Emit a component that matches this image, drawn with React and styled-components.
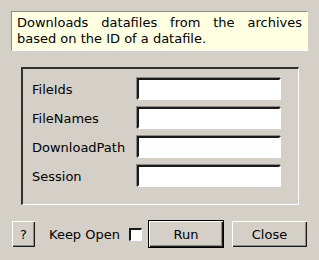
import styled, { createGlobalStyle } from "styled-components";

const GlobalStyle = createGlobalStyle`
    html, body {
        margin: 0;
        padding: 0;
        background: #d4d0c8;
    }
    * {
        box-sizing: border-box;
    }
`;

const fields = ["FileIds", "FileNames", "DownloadPath", "Session"];

export default function App() {
    return (
        <>
            <GlobalStyle />
            <Dialog>
                <Description>
                    Downloads datafiles from the archives based on the ID of a datafile.
                </Description>
                <Frame>
                    <Form>
                        {fields.map((name) => (
                            <Row key={name}>
                                <Label>{name}</Label>
                                <Entry type="text" />
                            </Row>
                        ))}
                    </Form>
                </Frame>
                <Footer>
                    <Button $width={23}>?</Button>
                    <KeepOpen>
                        Keep Open
                        <Check />
                    </KeepOpen>
                    <Button $width={76} $default>
                        Run
                    </Button>
                    <Button $width={75}>Close</Button>
                </Footer>
            </Dialog>
        </>
    );
}

const Dialog = styled.div`
    width: 319px;
    height: 260px;
    padding-top: 11px;
    display: flex;
    flex-direction: column;
    align-items: flex-start;
    font-family: "DejaVu Sans", "Liberation Sans", sans-serif;
    font-size: 13px;
    color: #000;
    background: #d4d0c8;
`;

const Description = styled.div`
    margin-left: 11px;
    width: 297px;
    height: 40px;
    padding: 3px 5px 0 5px;
    background: #ffffe1;
    border-top: 1px solid #8a8a8a;
    border-left: 1px solid #8a8a8a;
    border-right: 1px solid #ffffff;
    border-bottom: 1px solid #ffffff;
    line-height: 16px;
    text-align: justify;
`;

const Frame = styled.div`
    margin: 16px 0 0 21px;
    width: 278px;
    height: 138px;
    border-top: 2px solid #303030;
    border-left: 2px solid #303030;
    border-right: 1px solid #ffffff;
    border-bottom: 1px solid #ffffff;
    padding: 9px 0 0 9px;
`;

const Form = styled.div`
    display: flex;
    flex-direction: column;
    gap: 7px;
`;

const Row = styled.div`
    display: flex;
    align-items: center;
    height: 22px;
`;

const Label = styled.span`
    width: 105px;
    padding-top: 1px;
`;

const Entry = styled.input`
    width: 144px;
    height: 22px;
    margin: 0;
    padding: 0 3px;
    background: #ffffff;
    border-top: 2px solid #1a1a1a;
    border-left: 2px solid #1a1a1a;
    border-right: 2px solid #ffffff;
    border-bottom: 2px solid #ffffff;
    box-shadow: -1px -1px 0 0 #8a8a8a;
    outline: none;
    font: inherit;
`;

const Footer = styled.div`
    margin: 15px 0 0 12px;
    display: flex;
    align-items: center;
    height: 28px;
`;

const Button = styled.button`
    width: ${(p) => p.$width}px;
    height: ${(p) => (p.$default ? 28 : 26)}px;
    margin: 0 ${(p) => (p.$default ? 8 : 0)}px 0 0;
    padding: 0;
    background: #d4d0c8;
    border: ${(p) => (p.$default ? "1px solid #000" : "none")};
    box-shadow: inset 1px 1px 0 #ffffff, inset -1px -1px 0 #1a1a1a,
        inset -2px -2px 0 #8a8a8a;
    font: inherit;
    color: #000;
`;

const KeepOpen = styled.label`
    display: flex;
    align-items: center;
    gap: 9px;
    margin: 0 6px 0 14px;
`;

const Check = styled.span`
    display: inline-block;
    width: 13px;
    height: 13px;
    background: #ffffff;
    border-top: 2px solid #1a1a1a;
    border-left: 2px solid #1a1a1a;
    border-right: 1px solid #ffffff;
    border-bottom: 1px solid #ffffff;
`;
